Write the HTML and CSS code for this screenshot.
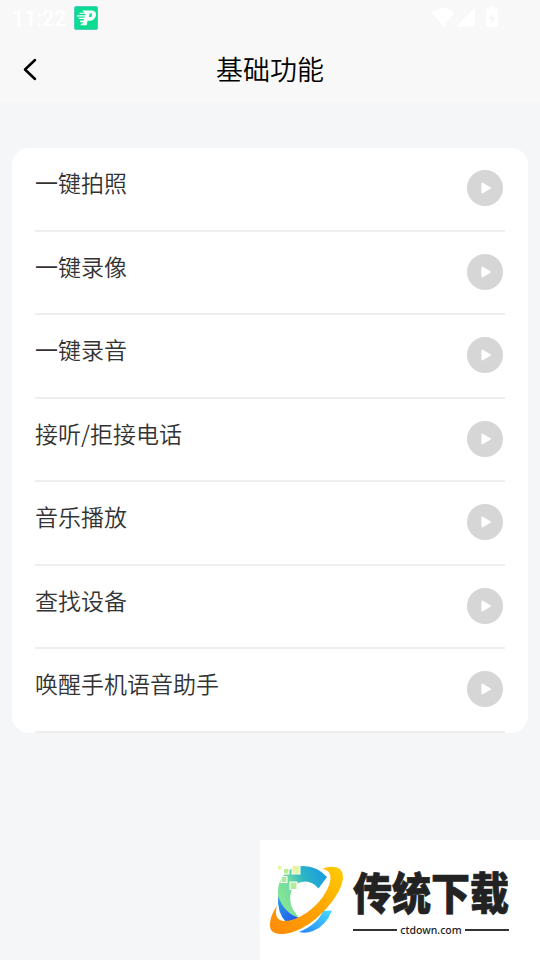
FILE: index.html
```
<!DOCTYPE html>
<html lang="zh-CN">
<head>
    <meta charset="UTF-8">
    <meta name="viewport" content="width=device-width, initial-scale=1.0">
    <title>基础功能</title>
    <link rel="stylesheet" href="styles.css">
</head>
<body>
    <header class="header">
        <div class="status">
            <span class="time">11:22</span>
            <svg class="app-icon" width="24" height="24" viewBox="0 0 24 24">
                <rect x="0.5" y="0.5" width="23" height="23" rx="1.5" fill="#0bdc92" stroke="#3fc8b8" stroke-width="0.8"/>
                <path d="M8.500 4.500H18q4.500.6 4 4.800-.8 5-6 5.400h-2.500l-.8 4.600H6.500l.5-1.500h1.500l.6-1.600H6l.4-1.600h3.300l.4-1.600H4.500l.3-1.200h5.600l.3-1.400H2.800l.3-1.200h8.200l.3-1.400H5.300l.3-1.100h4.600z" fill="#fff"/>
                <path d="M15.800 7.500h2.400l-.9 3.500h-2.400z" fill="#0bdc92"/>
            </svg>
            <svg class="signals" width="70" height="24" viewBox="0 0 70 24" fill="#fff">
                <path d="M0.500 6.500Q12 -2.500 23.500 6.500L12.300 20.500z"/>
                <path d="M44 1.500V20.500H25z"/>
                <path d="M56 2.500h2.500V.8h5v1.700H66q1 0 1 1V20q0 1-1 1H56q-1 0-1-1V3.500q0-1 1-1z"/>
                <path d="M62 7.500l-4 5.500h2.600l-.5 5 4-6.500h-2.700z" fill="#f4f4f4"/>
            </svg>
        </div>
        <div class="navbar">
            <svg class="back" width="16" height="24" viewBox="0 0 16 24">
                <path d="M13 3L3 12.500L13 22" fill="none" stroke="#000" stroke-width="2.500" stroke-linecap="round" stroke-linejoin="round"/>
            </svg>
            <h1>基础功能</h1>
        </div>
    </header>

    <svg width="0" height="0" class="defs">
        <symbol id="play" viewBox="0 0 36 36">
            <circle cx="18" cy="18" r="18" fill="#d6d6d6"/>
            <path d="M15.300 13.500L23 18L15.300 22.500z" fill="#fff" stroke="#fff" stroke-width="1.800" stroke-linejoin="round"/>
        </symbol>
    </svg>

    <ul class="list">
        <li><span>一键拍照</span><svg class="play"><use href="#play"/></svg></li>
        <li><span>一键录像</span><svg class="play"><use href="#play"/></svg></li>
        <li><span>一键录音</span><svg class="play"><use href="#play"/></svg></li>
        <li><span>接听/拒接电话</span><svg class="play"><use href="#play"/></svg></li>
        <li><span>音乐播放</span><svg class="play"><use href="#play"/></svg></li>
        <li><span>查找设备</span><svg class="play"><use href="#play"/></svg></li>
        <li><span>唤醒手机语音助手</span><svg class="play"><use href="#play"/></svg></li>
    </ul>

    <div class="brand">
        <svg class="brand-logo" width="90" height="120" viewBox="0 0 90 120">
            <defs>
                <linearGradient id="ring" x1="0" y1="1" x2="1" y2="0">
                    <stop offset="0" stop-color="#ff8a0a"/>
                    <stop offset="0.500" stop-color="#ffa300"/>
                    <stop offset="1" stop-color="#ffcd05"/>
                </linearGradient>
                <linearGradient id="arc" x1="0" y1="0.700" x2="1" y2="0.100">
                    <stop offset="0" stop-color="#8ce890"/>
                    <stop offset="0.350" stop-color="#6fdba0"/>
                    <stop offset="0.600" stop-color="#2db5c4"/>
                    <stop offset="1" stop-color="#1799e6"/>
                </linearGradient>
                <linearGradient id="deep" x1="0" y1="0" x2="1" y2="1">
                    <stop offset="0" stop-color="#28a0e8"/>
                    <stop offset="1" stop-color="#2352ec"/>
                </linearGradient>
                <linearGradient id="tail" x1="0" y1="1" x2="1" y2="0">
                    <stop offset="0" stop-color="#2684f5"/>
                    <stop offset="1" stop-color="#48dcff"/>
                </linearGradient>
            </defs>
            <path d="M18 54C17 38 29 26 43 26Q57 26 67 37L58.500 48.500Q51 40 42 42C30 44 27 60 34 71L39 78L26 82Q18 72 18 54z" fill="url(#arc)"/>
            <path d="M18 56Q24 73 39 78L26 82Q17 73 18 56z" fill="url(#deep)"/>
            <path d="M39 92Q58 84 63 71L72 70.500Q66 86 53 91Q46 94 39 92z" fill="url(#tail)"/>
            <path d="M62 29C72 25 83 26 83 37C83 51 65 73 49 84C32 95 16 97 11 90C8 84 12 72 17 66C14 75 17 81 25 81C38 81 56 68 64 55C72 43 74 30 62 29z" fill="url(#ring)"/>
            <g stroke="#fff" stroke-width="1">
                <rect x="17.500" y="25.500" width="4.500" height="4.500" fill="#e3f4a4"/>
                <rect x="23.500" y="28.500" width="5.500" height="5.500" fill="#bceb90"/>
                <rect x="32" y="25.500" width="8" height="8.500" fill="#e3f4a4"/>
                <rect x="21" y="36.500" width="6" height="6" fill="#b0e8a0"/>
                <rect x="30" y="42" width="7" height="7.500" fill="#b3ee9e"/>
            </g>
        </svg>
        <div class="brand-text">
            <div class="brand-name">传统下载</div>
            <div class="brand-url">ctdown.com</div>
        </div>
    </div>
</body>
</html>
```
FILE: styles.css
```
* {
    box-sizing: border-box;
}
body {
    margin: 0;
    height: 960px;
    display: flex;
    flex-direction: column;
    overflow: hidden;
    background-color: #f4f6f8;
    font-family: "Noto Sans CJK SC", sans-serif;
    color: #333;
}
.header {
    height: 102px;
    flex-shrink: 0;
    background-color: #f8f8f8;
}
.status {
    height: 38px;
    display: flex;
    align-items: flex-start;
    padding: 6px 39px 0 12px;
}
.time {
    width: 61.5px;
    font-family: Roboto, sans-serif;
    font-size: 21.5px;
    font-weight: 500;
    line-height: 25px;
    color: #fff;
}
.signals {
    margin-left: auto;
}
.navbar {
    height: 62px;
    display: grid;
    grid-template-columns: 16px 1fr 16px;
    align-items: center;
    padding: 0 22px;
}
h1 {
    margin: 0;
    text-align: center;
    font-size: 27px;
    font-weight: 350;
    line-height: 40px;
    color: #000;
}
.defs {
    display: none;
}
.list {
    list-style: none;
    margin: 46px 12px 0;
    padding: 0 23px;
    background-color: #fff;
    border-radius: 17px;
}
.list li {
    height: 83.5px;
    display: flex;
    justify-content: space-between;
    padding: 17px 2px 0 0;
    border-bottom: 2px solid #eee;
    font-size: 23px;
    font-weight: 350;
    line-height: 34px;
}
.play {
    width: 36px;
    height: 36px;
    margin-top: 5px;
}
.brand {
    width: 280px;
    height: 120px;
    margin-top: auto;
    margin-left: auto;
    flex-shrink: 0;
    display: flex;
    background-color: #fff;
}
.brand-text {
    width: 156px;
    margin-left: 3px;
    padding-top: 24px;
    color: #222;
}
.brand-name {
    height: 58px;
    font-size: 39px;
    font-weight: 900;
    line-height: 54px;
    white-space: nowrap;
    -webkit-text-stroke: 0.6px #222;
    transform: scaleY(1.13);
}
.brand-url {
    display: flex;
    align-items: center;
    gap: 3px;
    height: 16px;
    font-family: "Noto Sans", sans-serif;
    font-size: 10.5px;
    font-weight: 500;
    line-height: 16px;
}
.brand-url::before,
.brand-url::after {
    content: "";
    flex: 1;
    height: 2px;
    background-color: #333;
}
```
